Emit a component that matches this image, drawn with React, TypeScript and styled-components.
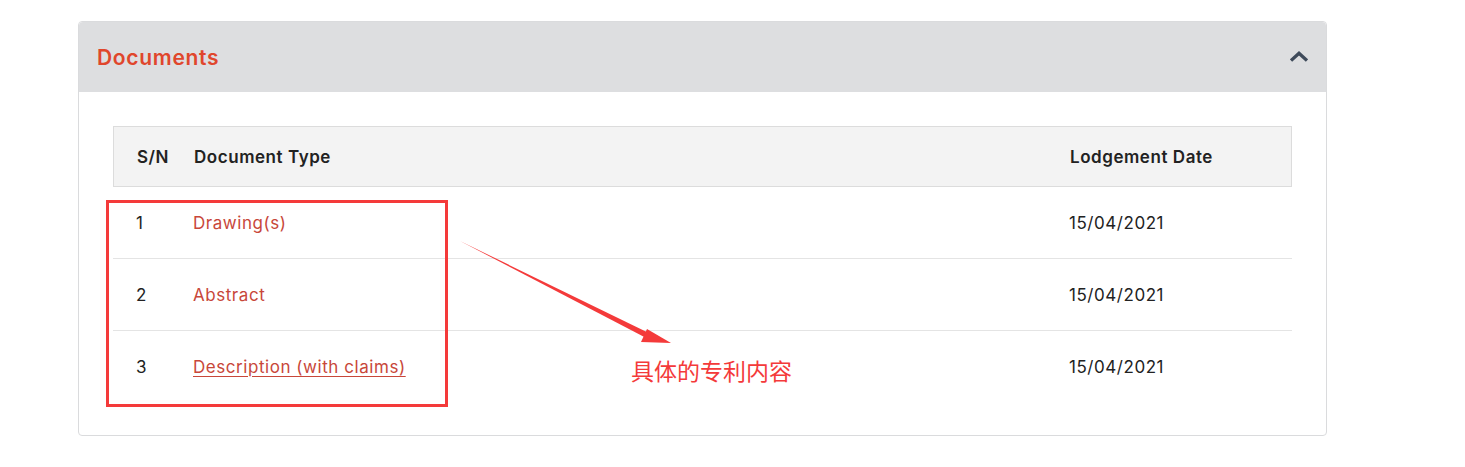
import React from 'react';
import styled, { createGlobalStyle } from 'styled-components';

const GlobalStyle = createGlobalStyle`
  body {
    margin: 0;
    background: #ffffff;
    font-family: Inter, "Noto Sans", sans-serif;
    color: #222;
  }
`;

const documents = [
  { sn: 1, type: 'Drawing(s)', date: '15/04/2021', underline: false },
  { sn: 2, type: 'Abstract', date: '15/04/2021', underline: false },
  { sn: 3, type: 'Description (with claims)', date: '15/04/2021', underline: true },
];

const App = () => {
  return (
    <>
      <GlobalStyle />
      <Page>
        <Card>
          <CardHeader>
            <Title>Documents</Title>
            <Chevron viewBox="0 0 16 10" aria-hidden="true">
              <path d="M2 8 L8 2.5 L14 8" />
            </Chevron>
          </CardHeader>
          <CardBody>
            <Table>
              <HeadRow>
                <Cell className="first">S/N</Cell>
                <Cell>Document Type</Cell>
                <Cell>Lodgement Date</Cell>
              </HeadRow>
              {documents.map((doc) => (
                <Row key={doc.sn}>
                  <Cell className="first">{doc.sn}</Cell>
                  <Cell>
                    <DocLink href="#" $underline={doc.underline}>
                      {doc.type}
                    </DocLink>
                  </Cell>
                  <Cell>{doc.date}</Cell>
                </Row>
              ))}
            </Table>
          </CardBody>

          {/* screenshot annotation drawn on top */}
          <Highlight />
          <Arrow viewBox="0 0 230 120" aria-hidden="true">
            <path d="M1 1 L196 96 L193 101 Z" />
            <path d="M212 103 L188 89 L182 102 Z" />
          </Arrow>
          <Note>具体的专利内容</Note>
        </Card>
      </Page>
    </>
  );
};

export default App;

const Page = styled.div`
  padding: 21px 0 0 78px;
`;

const Card = styled.div`
  position: relative;
  width: 1247px;
  border: 1px solid #dadbdd;
  border-radius: 4px;
`;

const CardHeader = styled.div`
  display: flex;
  align-items: center;
  justify-content: space-between;
  height: 70px;
  padding: 0 18px;
  background: #dddee0;
  border-radius: 4px 4px 0 0;
`;

const Title = styled.h2`
  margin: 0;
  font-size: 21px;
  font-weight: 600;
  color: #e0462c;
  letter-spacing: 0.7px;
`;

const Chevron = styled.svg`
  width: 18px;
  height: 12px;
  margin-top: -2px;
  fill: none;
  stroke: #3e4a5a;
  stroke-width: 3;
  stroke-linecap: square;
`;

const CardBody = styled.div`
  padding: 34px 34px 33px;
`;

const Table = styled.div`
  display: flex;
  flex-direction: column;
`;

const HeadRow = styled.div`
  display: grid;
  grid-template-columns: 80px 876px 1fr;
  align-items: center;
  height: 59px;
  background: #f3f3f3;
  border: 1px solid #dcdcdc;

  & > div {
    font-weight: 600;
  }
`;

const Row = styled.div`
  display: grid;
  grid-template-columns: 80px 876px 1fr;
  align-items: center;
  height: 71px;
  border-bottom: 1px solid #e4e4e4;

  &:last-child {
    border-bottom: none;
  }
`;

const Cell = styled.div`
  font-size: 17px;
  line-height: 20px;
  letter-spacing: 0.55px;
  color: #222;

  &.first {
    padding-left: 23px;
  }
`;

const DocLink = styled.a<{ $underline: boolean }>`
  color: #c8473a;
  text-decoration: ${(p) => (p.$underline ? 'underline' : 'none')};
  text-underline-offset: 3px;
`;

const Highlight = styled.div`
  position: absolute;
  left: 27px;
  top: 178px;
  width: 336px;
  height: 201px;
  border: 3px solid #f43a3a;
  pointer-events: none;
`;

const Arrow = styled.svg`
  position: absolute;
  left: 380px;
  top: 218px;
  width: 230px;
  height: 120px;
  fill: #f43a3a;
  pointer-events: none;
`;

const Note = styled.div`
  position: absolute;
  left: 552px;
  top: 331px;
  font-family: "Noto Sans CJK SC", sans-serif;
  font-size: 23px;
  color: #f43a3a;
  pointer-events: none;
`;
